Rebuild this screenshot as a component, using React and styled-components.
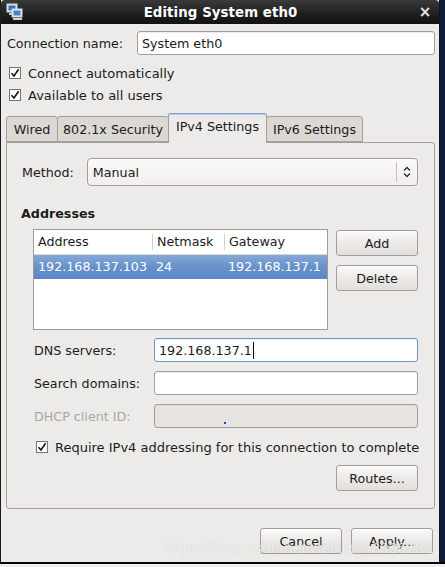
import React from "react"
import styled, { createGlobalStyle } from "styled-components"

const GlobalStyle = createGlobalStyle`
  html, body {
    margin: 0;
    padding: 0;
    background: #f0f0f0;
  }
  body {
    font-family: "DejaVu Sans", "Liberation Sans", sans-serif;
    font-size: 12.7px;
    color: #1b1b1b;
  }
`

const Screen = styled.div`
  width: 445px;
  height: 567px;
  display: flex;
  flex-direction: column;
  position: relative;
  overflow: hidden;
`

const Desktop = styled.div`
  height: 562px;
  display: flex;
  background: #0f1c3d;
  border-bottom: 2px solid #050505;
`

const Window = styled.div`
  width: 438px;
  display: flex;
  flex-direction: column;
  background: #edebe9;
  border-left: 1px solid #1c1c1c;
  border-right: 1px solid #151515;
`

const TitleBar = styled.div`
  height: 24px;
  flex: none;
  display: flex;
  align-items: center;
  padding: 0 6px 0 5px;
  background: linear-gradient(#3a3a3a, #1e1e1e 60%, #121212);
  border-top-left-radius: 4px;
  border-top-right-radius: 4px;
  color: #fff;
`

const Title = styled.div`
  flex: 1;
  text-align: center;
  font-weight: bold;
  font-size: 13.3px;
  letter-spacing: 0.1px;
`

const Close = styled.div`
  width: 16px;
  font-weight: bold;
  font-size: 15px;
  color: #e8e8e8;
  text-align: center;
`

const Body = styled.div`
  flex: 1;
  display: flex;
  flex-direction: column;
  padding: 7px 4px 0 5px;
`

const Row = styled.div`
  display: flex;
  align-items: center;
  gap: ${(p) => p.$gap || 0}px;
  height: ${(p) => p.$h || 24}px;
  margin-top: ${(p) => p.$mt || 0}px;
  justify-content: ${(p) => (p.$end ? "flex-end" : "flex-start")};
`

const Label = styled.span`
  width: ${(p) => (p.$w ? `${p.$w}px` : "auto")};
  flex: none;
  padding-left: 1px;
  box-sizing: border-box;
  white-space: nowrap;
  color: ${(p) => (p.$disabled ? "#a8a6a2" : "#1b1b1b")};
`

const Input = styled.div`
  flex: 1;
  height: 24px;
  box-sizing: border-box;
  border: 1px solid ${(p) => (p.$focus ? "#6e95c8" : "#a29f9b")};
  border-radius: 3px;
  background: ${(p) => (p.$disabled ? "#e6e4e1" : "#fff")};
  box-shadow: inset 0 1px 1px ${(p) => (p.$disabled ? "rgba(0,0,0,0.03)" : "rgba(0,0,0,0.08)")};
  display: flex;
  align-items: center;
  padding-left: 4px;
  position: relative;
`

const Caret = styled.span`
  display: inline-block;
  width: 1px;
  height: 17px;
  background: #000;
  margin-left: 1px;
`

const Dot = styled.span`
  position: absolute;
  left: 69px;
  top: 17px;
  width: 2px;
  height: 2px;
  background: #2b3cd6;
`

const CheckBox = styled.span`
  width: 12px;
  height: 12px;
  flex: none;
  box-sizing: border-box;
  border: 1px solid #77746f;
  background: #fff;
  display: flex;
  align-items: center;
  justify-content: center;
`

const CheckRow = styled.div`
  display: flex;
  align-items: center;
  gap: 7px;
  height: 22px;
  font-size: 13px;
  white-space: nowrap;
  padding-left: ${(p) => p.$pl || 3}px;
  margin-top: ${(p) => p.$mt || 0}px;
`

const Tabs = styled.div`
  display: flex;
  align-items: flex-end;
  margin-top: 7px;
  height: 29px;
  position: relative;
  z-index: 1;
`

const Tab = styled.div`
  box-sizing: border-box;
  height: ${(p) => (p.$active ? 30 : 26)}px;
  width: ${(p) => p.$w}px;
  display: flex;
  align-items: center;
  justify-content: center;
  padding-bottom: ${(p) => (p.$active ? 4 : 0)}px;
  background: ${(p) => (p.$active ? "#edebe9" : "#dcd9d5")};
  border: 1px solid #a3a09b;
  border-top-color: ${(p) => (p.$active ? "#7e9ccc" : "#a3a09b")};
  border-bottom: ${(p) => (p.$active ? "none" : "1px solid #a3a09b")};
  border-radius: 3px 3px 0 0;
  margin-right: -1px;
  margin-bottom: ${(p) => (p.$active ? -1 : 0)}px;
  box-shadow: ${(p) => (p.$active ? "inset 0 1px 0 #b9cde8" : "none")};
`

const Panel = styled.div`
  box-sizing: border-box;
  width: 429px;
  height: 367px;
  border: 1px solid #a3a09b;
  border-radius: 0 3px 3px 3px;
  padding: 15px 16px 0 14px;
  display: flex;
  flex-direction: column;
`

const Combo = styled.div`
  flex: 1;
  height: 28px;
  box-sizing: border-box;
  border: 1px solid #a29f9b;
  border-radius: 4px;
  background: linear-gradient(#fbfaf9, #f1efed);
  display: flex;
  align-items: center;
  padding-left: 5px;
`

const ComboText = styled.span`
  flex: 1;
`

const ComboSep = styled.span`
  width: 1px;
  height: 20px;
  background: #c3c0bc;
`

const ComboArrow = styled.span`
  width: 20px;
  display: flex;
  justify-content: center;
`

const SectionTitle = styled.div`
  font-weight: bold;
  margin-top: 19px;
  height: 17px;
  line-height: 17px;
`

const AddrArea = styled.div`
  display: flex;
  gap: 8px;
  margin-top: 7px;
  padding-left: 12px;
`

const Table = styled.div`
  width: 295px;
  height: 101px;
  box-sizing: border-box;
  border: 1px solid #9f9c98;
  background: #fff;
`

const TableRow = styled.div`
  display: grid;
  grid-template-columns: 118px 72px 1fr;
  height: 24px;
  align-items: center;
  color: ${(p) => (p.$selected ? "#fff" : "#1b1b1b")};
  background: ${(p) =>
    p.$selected ? "linear-gradient(#84a8d8, #6891cb 50%, #5b87c5)" : "#fff"};
  border-bottom: ${(p) => (p.$head ? "1px solid #dad7d3" : "none")};
`

const Cell = styled.span`
  height: 16px;
  line-height: 16px;
  border-left: ${(p) => (p.$sep ? "1px solid #d3d0cc" : "none")};
  padding-left: 4px;
  white-space: nowrap;
`

const ButtonCol = styled.div`
  display: flex;
  flex-direction: column;
  gap: 9px;
  padding-top: 1px;
`

const Button = styled.div`
  width: ${(p) => p.$w || 82}px;
  height: 26px;
  box-sizing: border-box;
  border: 1px solid #a19e99;
  border-radius: 3px;
  background: linear-gradient(#fbfaf9, #ebe9e6 55%, #e2dfdb);
  display: flex;
  align-items: center;
  justify-content: center;
  box-shadow: inset 0 1px 0 #fff;
`

const FormGrid = styled.div`
  display: flex;
  flex-direction: column;
  gap: 9px;
  margin-top: 8px;
  padding-left: 12px;
`

const Footer = styled.div`
  display: flex;
  justify-content: flex-end;
  gap: 9px;
  margin-top: 19px;
  padding-right: 2px;
`

const Watermark = styled.div`
  position: absolute;
  left: 165px;
  top: 539px;
  font-family: "Liberation Sans", Arial, sans-serif;
  font-size: 15.5px;
  color: rgba(255, 255, 255, 0.72);
  text-shadow: 0 0 1px rgba(120, 120, 120, 0.35);
  letter-spacing: 0.1px;
  pointer-events: none;
`

const Check = () => (
  <CheckBox>
    <svg width="10" height="10" viewBox="0 0 10 10">
      <path d="M1.5 5.2 L4 8 L8.6 1.3" fill="none" stroke="#111" strokeWidth="1.6" />
    </svg>
  </CheckBox>
)

const NetIcon = () => (
  <svg width="18" height="18" viewBox="0 0 18 18">
    <rect x="1" y="1" width="10" height="8" fill="#dfe6ef" stroke="#cfd6df" />
    <rect x="2.5" y="2.5" width="7" height="5" fill="#3b6fb4" />
    <rect x="3" y="10" width="6" height="2" fill="#c9c9c9" />
    <rect x="6" y="6" width="10" height="8" fill="#e8edf3" stroke="#cfd6df" />
    <rect x="7.5" y="7.5" width="7" height="5" fill="#4a82c8" />
    <rect x="7" y="15" width="9" height="2" fill="#d5d5d5" />
  </svg>
)

const UpDown = () => (
  <svg width="8" height="12" viewBox="0 0 8 12">
    <path d="M1 4.5 L4 1.5 L7 4.5 M1 7.5 L4 10.5 L7 7.5" fill="none" stroke="#2a2a2a" strokeWidth="1.3" />
  </svg>
)

const App = () => {
  return (
    <Screen>
      <GlobalStyle />
      <Desktop>
        <Window>
          <TitleBar>
            <NetIcon />
            <Title>Editing System eth0</Title>
            <Close>×</Close>
          </TitleBar>
          <Body>
            <Row>
              <Label $w={131}>Connection name:</Label>
              <Input>System eth0</Input>
            </Row>
            <CheckRow $mt={7}>
              <Check />
              <span>Connect automatically</span>
            </CheckRow>
            <CheckRow>
              <Check />
              <span>Available to all users</span>
            </CheckRow>

            <Tabs>
              <Tab $w={52}>Wired</Tab>
              <Tab $w={112}>802.1x Security</Tab>
              <Tab $w={99} $active>
                IPv4 Settings
              </Tab>
              <Tab $w={97}>IPv6 Settings</Tab>
            </Tabs>
            <Panel>
              <Row $gap={13} $h={28}>
                <Label>Method:</Label>
                <Combo>
                  <ComboText>Manual</ComboText>
                  <ComboSep />
                  <ComboArrow>
                    <UpDown />
                  </ComboArrow>
                </Combo>
              </Row>

              <SectionTitle>Addresses</SectionTitle>
              <AddrArea>
                <Table>
                  <TableRow $head>
                    <Cell>Address</Cell>
                    <Cell $sep>Netmask</Cell>
                    <Cell $sep>Gateway</Cell>
                  </TableRow>
                  <TableRow $selected>
                    <Cell>192.168.137.103</Cell>
                    <Cell>24</Cell>
                    <Cell>192.168.137.1</Cell>
                  </TableRow>
                </Table>
                <ButtonCol>
                  <Button>Add</Button>
                  <Button>Delete</Button>
                </ButtonCol>
              </AddrArea>

              <FormGrid>
                <Row>
                  <Label $w={121}>DNS servers:</Label>
                  <Input $focus>
                    192.168.137.1
                    <Caret />
                  </Input>
                </Row>
                <Row>
                  <Label $w={121}>Search domains:</Label>
                  <Input />
                </Row>
                <Row>
                  <Label $w={121} $disabled>
                    DHCP client ID:
                  </Label>
                  <Input $disabled>
                    <Dot />
                  </Input>
                </Row>
              </FormGrid>

              <CheckRow $mt={8} $pl={15}>
                <Check />
                <span>Require IPv4 addressing for this connection to complete</span>
              </CheckRow>
              <Row $end $h={26} $mt={7}>
                <Button>Routes...</Button>
              </Row>
            </Panel>

            <Footer>
              <Button>Cancel</Button>
              <Button>Apply...</Button>
            </Footer>
          </Body>
        </Window>
      </Desktop>
      <Watermark>https://blog.csdn.net/weixin_43936281</Watermark>
    </Screen>
  )
}

export default App
